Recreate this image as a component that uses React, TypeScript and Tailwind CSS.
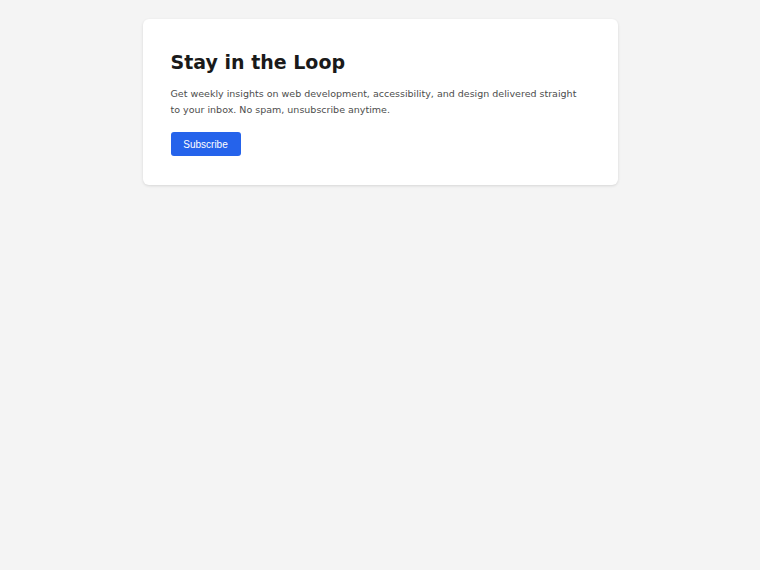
export default function App() {
  return (
    <div className="min-h-screen bg-[#f4f4f4] pt-[19px] font-['DejaVu_Sans',sans-serif]">
      <section className="mx-auto w-[475px] rounded-md bg-white px-7 pt-7 pb-[29px] shadow-[0_1px_3px_rgba(0,0,0,0.12)]">
        <h2 className="text-[19px] leading-[30px] font-bold text-[#1a1a1a]">Stay in the Loop</h2>
        <p className="mt-[9px] max-w-[410px] text-[9.5px] leading-[16px] text-[#4d4d4d]">
          Get weekly insights on web development, accessibility, and design delivered straight to your inbox. No spam,
          unsubscribe anytime.
        </p>
        <button className="mt-[14px] h-6 w-[70px] rounded-[3px] bg-[#2563eb] font-['Liberation_Sans',Arial,sans-serif] text-[10px] text-white">
          Subscribe
        </button>
      </section>
    </div>
  )
}
